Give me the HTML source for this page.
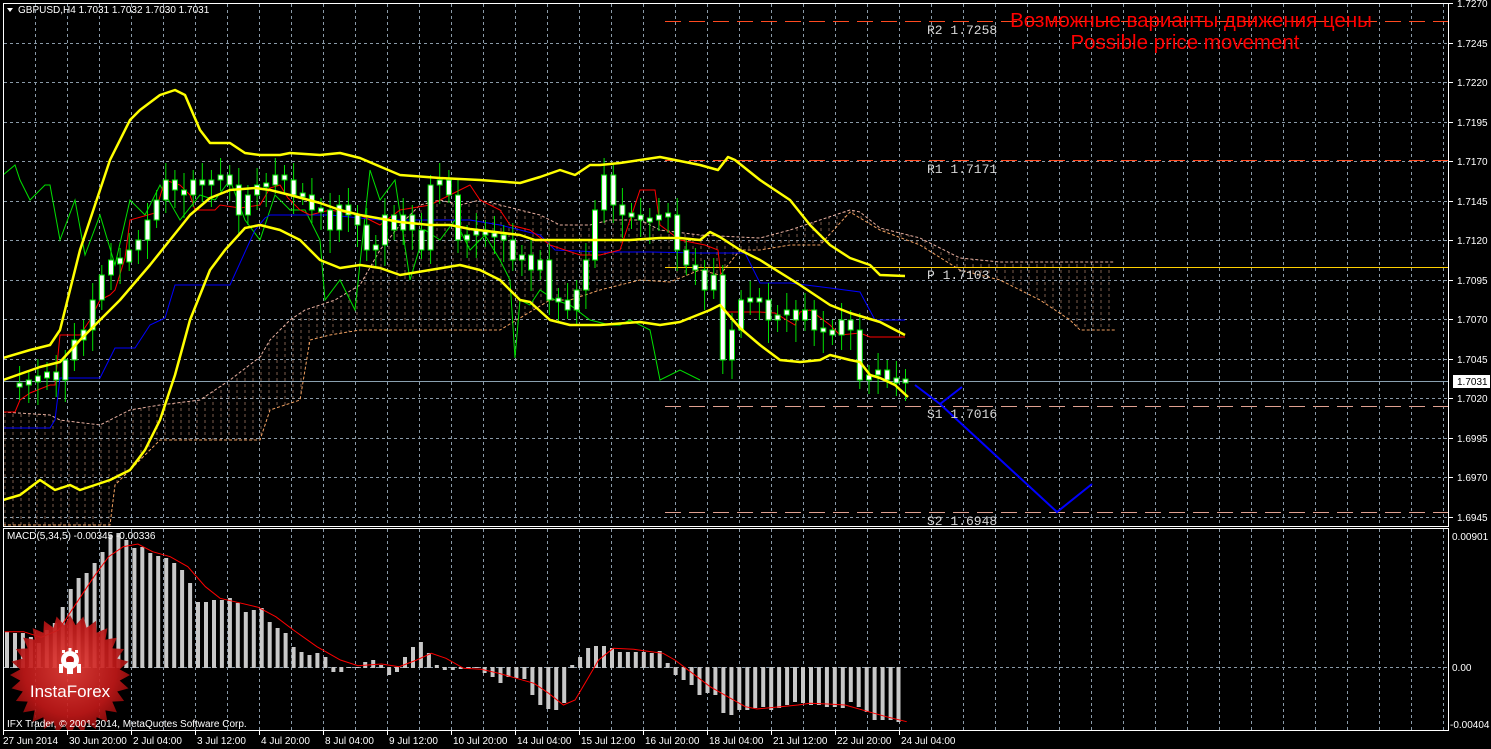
<!DOCTYPE html>
<html><head><meta charset="utf-8">
<style>
html,body{margin:0;padding:0;background:#000;}
body{width:1491px;height:749px;overflow:hidden;position:relative;}
svg{position:absolute;left:0;top:0;}
</style></head>
<body>
<svg id="s" width="1491" height="749" xmlns="http://www.w3.org/2000/svg" font-family="Liberation Sans, sans-serif">
<defs>
<clipPath id="mainclip"><rect x="4" y="4" width="1444" height="522"/></clipPath>
<clipPath id="macdclip"><rect x="4" y="529" width="1444" height="201"/></clipPath>
<pattern id="hatch" width="8" height="6" patternUnits="userSpaceOnUse" x="3">
<line x1="2" y1="0" x2="2" y2="3" stroke="#e8b090" stroke-width="1" opacity="0.75"/>
</pattern>
<radialGradient id="lg" cx="50%" cy="45%" r="55%">
<stop offset="0" stop-color="#e8403a"/><stop offset="0.7" stop-color="#c01818"/><stop offset="1" stop-color="#8a0a0a"/>
</radialGradient>
</defs>
<g id="g"></g>
</svg>
<script>
var out=[];
function P(a){return a.map(function(p){return p[0]+','+p[1];}).join(' ');}
out.push('<rect x="3.5" y="3.5" width="1445" height="523" fill="none" stroke="#fff"/>');
out.push('<rect x="3.5" y="528.5" width="1445" height="202" fill="none" stroke="#fff"/>');
var gv='';
for(var x=35;x<1448;x+=32){gv+='<line x1="'+x+'.5" y1="4" x2="'+x+'.5" y2="526" stroke="#8a9aa8" stroke-dasharray="3,3"/>';
 gv+='<line x1="'+x+'.5" y1="529" x2="'+x+'.5" y2="730" stroke="#8a9aa8" stroke-dasharray="3,3"/>';}
var prices=['1.7270','1.7245','1.7220','1.7195','1.7170','1.7145','1.7120','1.7095','1.7070','1.7045','1.7020','1.6995','1.6970','1.6945'];
for(var i=0;i<prices.length;i++){var y=Math.round(3+i*39.5);
 if(i>0)gv+='<line x1="4" y1="'+y+'.5" x2="1448" y2="'+y+'.5" stroke="#8a9aa8" stroke-dasharray="3,3"/>';
 gv+='<line x1="1449" y1="'+y+'.5" x2="1453" y2="'+y+'.5" stroke="#fff"/>';
 gv+='<text x="1457" y="'+(y+4)+'" font-size="10" fill="#fff">'+prices[i]+'</text>';}
gv+='<line x1="4" y1="667.5" x2="1448" y2="667.5" stroke="#8a9aa8" stroke-dasharray="3,3"/>';
gv+='<text x="1452" y="540" font-size="10" fill="#fff">0.00901</text>';
gv+='<text x="1452" y="671" font-size="10" fill="#fff">0.00</text>';
gv+='<text x="1450" y="728" font-size="10" fill="#fff">-0.00404</text>';
out.push(gv);
var m=['<g clip-path="url(#mainclip)">'];
var up=[[3,412],[50,415],[60,420],[100,425],[130,410],[160,405],[200,400],[230,380],[260,357],[270,340],[290,320],[305,310],[320,305],[335,300],[360,285],[380,250],[400,225],[420,205],[440,200],[460,205],[480,200],[500,205],[520,210],[540,215],[560,225],[590,225],[610,220],[640,220],[660,230],[700,235],[760,238],[790,230],[820,220],[850,210],[860,212],[880,228],[920,238],[960,258],[1000,262],[1115,262]];
var lo=[[3,525],[110,525],[115,485],[160,440],[200,440],[260,440],[270,410],[300,400],[310,340],[330,335],[360,330],[400,330],[500,330],[550,300],[570,300],[600,290],[640,280],[670,282],[700,270],[720,275],[740,250],[760,250],[790,245],[820,245],[850,212],[880,230],[920,245],[960,270],[1000,280],[1040,300],[1070,320],[1080,330],[1115,330]];
m.push('<polygon points="'+P(up)+' '+P(lo.slice().reverse())+'" fill="url(#hatch)" opacity="0.7"/>');
m.push('<polyline points="'+P(up)+'" fill="none" stroke="#e8b0a0" stroke-dasharray="3,2"/>');
m.push('<polyline points="'+P(lo)+'" fill="none" stroke="#f0a060" stroke-dasharray="3,2"/>');
m.push('<line x1="665" y1="21.5" x2="1448" y2="21.5" stroke="#ff4a20" stroke-dasharray="16,8"/>');
m.push('<line x1="665" y1="160.5" x2="1448" y2="160.5" stroke="#ff4a20" stroke-dasharray="16,8"/>');
m.push('<line x1="665" y1="267.5" x2="1448" y2="267.5" stroke="#ffd000"/>');
m.push('<line x1="4" y1="381.5" x2="1448" y2="381.5" stroke="#8aa0b0"/>');
m.push('<line x1="665" y1="406.5" x2="1448" y2="406.5" stroke="#e0a090" stroke-dasharray="16,8"/>');
m.push('<line x1="665" y1="512.5" x2="1448" y2="512.5" stroke="#e0a090" stroke-dasharray="16,8"/>');
var gr=[[3,175],[15,165],[20,180],[30,200],[45,185],[50,185],[60,240],[75,200],[85,255],[100,215],[115,265],[130,200],[145,215],[160,185],[180,220],[200,195],[215,200],[230,180],[245,220],[260,240],[275,195],[290,210],[305,210],[320,240],[325,300],[340,280],[355,310],[370,170],[380,200],[395,180],[410,280],[425,230],[440,240],[455,220],[470,250],[485,235],[500,260],[510,280],[515,358],[520,300],[530,305],[540,290],[555,300],[570,305],[590,320],[610,325],[620,325],[630,320],[650,330],[660,380],[680,370],[700,380]];
m.push('<polyline points="'+P(gr)+'" fill="none" stroke="#00e000" stroke-width="1"/>');
var bl=[[3,428],[50,428],[55,420],[60,378],[100,378],[115,348],[135,348],[150,325],[165,318],[175,285],[230,285],[255,230],[265,218],[270,215],[330,215],[380,220],[470,220],[500,225],[540,235],[555,250],[600,252],[650,252],[700,253],[745,253],[760,283],[790,283],[830,288],[860,292],[875,320],[905,320]];
m.push('<polyline points="'+P(bl)+'" fill="none" stroke="#0000ff" stroke-width="1"/>');
var rd=[[3,412],[15,412],[20,400],[30,393],[50,385],[55,385],[60,335],[80,335],[90,320],[100,300],[110,295],[115,290],[125,258],[130,220],[155,213],[165,180],[180,185],[190,195],[195,210],[200,210],[215,210],[220,205],[240,208],[260,205],[270,188],[280,185],[288,198],[300,210],[310,215],[330,210],[360,215],[380,225],[400,210],[430,205],[450,195],[460,190],[470,185],[480,200],[500,210],[510,225],[530,230],[550,245],[565,250],[580,255],[600,255],[620,250],[640,190],[655,190],[660,225],[680,240],[705,245],[718,250],[725,312],[760,312],[775,313],[795,325],[800,312],[810,310],[830,325],[840,335],[860,333],[870,337],[905,337]];
m.push('<polyline points="'+P(rd)+'" fill="none" stroke="#ff0000" stroke-width="1"/>');
var cl=[385,385,380,378,372,380,360,340,330,300,275,260,262,250,240,220,200,180,190,195,180,185,180,175,185,215,195,185,185,175,180,195,195,210,210,230,205,215,225,250,245,215,230,215,230,250,185,180,195,240,235,230,235,235,240,260,255,270,260,300,300,310,290,260,210,175,205,215,215,220,220,215,215,250,265,270,290,275,360,330,300,300,300,320,315,310,320,310,330,330,335,320,330,380,375,370,380,381,381];
var cs='';var n=cl.length;var sp=895/(n-1);
for(var i=1;i<n;i++){var x=(8+i*sp).toFixed(1), o=cl[i-1], c=cl[i];
 var t=Math.min(o,c), b=Math.max(o,c); if(b-t<4){t-=2;b+=2;}
 var wt=t-10-((i*7)%14), wb=b+8+((i*5)%16);
 cs+='<line x1="'+(+x+2.5)+'" y1="'+wt+'" x2="'+(+x+2.5)+'" y2="'+wb+'" stroke="#00e000"/>';
 cs+='<rect x="'+x+'" y="'+t+'" width="5" height="'+(b-t)+'" fill="#fff" stroke="#00e000" stroke-width="1"/>';}
m.push(cs);
var yu=[[3,358],[30,350],[50,345],[60,330],[80,250],[100,190],[110,160],[130,120],[140,110],[160,95],[175,90],[185,95],[200,130],[210,143],[230,143],[245,153],[260,155],[280,155],[290,153],[320,155],[340,153],[360,158],[400,175],[440,178],[480,180],[520,183],[540,177],[560,170],[575,175],[590,165],[600,165],[620,163],[660,157],[700,165],[718,170],[728,157],[735,160],[760,180],[790,200],[810,225],[830,245],[850,258],[870,265],[880,275],[905,276]];
var ym=[[3,380],[40,367],[60,362],[80,340],[100,320],[120,300],[150,265],[170,240],[190,215],[210,198],[230,190],[255,188],[270,190],[290,195],[320,203],[340,210],[360,215],[400,222],[430,225],[450,225],[470,229],[520,235],[535,240],[550,240],[580,240],[600,240],[630,240],[660,238],[680,238],[700,240],[710,232],[720,237],[740,250],[760,260],[800,285],[830,305],[850,313],[880,322],[905,335]];
var yl=[[3,500],[20,495],[40,480],[55,490],[70,485],[80,490],[95,485],[110,480],[130,470],[145,450],[160,420],[175,375],[190,320],[210,270],[225,250],[245,228],[260,225],[280,230],[300,240],[320,260],[340,268],[360,265],[380,268],[400,275],[430,270],[460,265],[480,270],[500,280],[520,300],[530,302],[550,320],[570,325],[600,325],[640,322],[660,325],[680,322],[710,310],[720,305],[740,328],[760,345],[780,360],[800,362],[820,360],[830,355],[850,360],[860,362],[870,375],[880,378],[895,385],[908,397]];
[yu,ym,yl].forEach(function(a){m.push('<polyline points="'+P(a)+'" fill="none" stroke="#ffff00" stroke-width="2.5" stroke-linejoin="round"/>');});
m.push('<polyline points="915,385 940,404 962,387" fill="none" stroke="#0000ff" stroke-width="2"/>');
m.push('<polyline points="940,404 1057,512 1092,484" fill="none" stroke="#0000ff" stroke-width="2"/>');
m.push('</g>');
out.push(m.join(''));
var lf='style="font-family:\'Liberation Mono\',monospace;font-size:13px;" fill="#d8d8d8"';
out.push('<text x="927" y="34" '+lf+'>R2 1.7258</text><text x="927" y="173" '+lf+'>R1 1.7171</text><text x="927" y="279" '+lf+'>P  1.7103</text><text x="927" y="418" '+lf+'>S1 1.7016</text><text x="927" y="525" '+lf+'>S2 1.6948</text>');
out.push('<text x="1191" y="27" font-size="20.5" fill="#ff0000" text-anchor="middle">Возможные варианты движения цены</text>');
out.push('<text x="1185" y="49" font-size="20.5" fill="#ff0000" text-anchor="middle">Possible price movement</text>');
out.push('<rect x="1453" y="375" width="37" height="13" fill="#fff"/><text x="1457" y="385" font-size="10" fill="#000">1.7031</text>');
out.push('<polygon points="7,8 13,8 10,12" fill="#fff"/><text x="18" y="13" font-size="10" fill="#fff">GBPUSD,H4  1.7031 1.7032 1.7030 1.7031</text>');
var mc=['<g clip-path="url(#macdclip)">'];
var tops=[632,633,633,637,643,630,623,607,589,578,573,563,552,535,533,540,548,547,553,556,558,563,570,583,602,602,600,600,598,603,612,610,608,622,628,633,647,652,655,653,657,672,672,668,667,662,660,665,675,672,657,647,642,653,665,670,670,669,669,668,673,677,683,677,678,679,695,705,709,710,703,665,657,648,646,646,648,652,652,652,652,653,651,663,675,680,685,695,693,695,713,715,710,710,708,707,710,708,705,702,703,705,705,707,707,708,702,707,712,720,720,720,722];
var bs='';
for(var i=0;i<tops.length;i++){var x=(5+i*7.96).toFixed(1);var t=tops[i];var y1=Math.min(t,667),y2=Math.max(t,668);
 bs+='<rect x="'+x+'" y="'+y1+'" width="4" height="'+(y2-y1)+'" fill="#c8c8c8"/>';}
mc.push(bs);
var sg=[[8,335],[40,335],[70,352],[100,330],[130,250],[160,170],[185,110],[210,80],[235,72],[260,95],[290,110],[320,140],[350,200],[375,235],[400,245],[440,262],[470,290],[500,330],[540,380],[580,420],[610,437],[650,432],[680,440],[710,420],[735,400],[760,415],[790,445],[820,448],[850,460],[880,475],[910,490],[935,520],[960,555],[980,540],[1000,480],[1020,420],[1045,385],[1080,388],[1110,395],[1130,400],[1150,420],[1180,460],[1210,500],[1240,530],[1270,560],[1290,567],[1330,560],[1360,555],[1380,550],[1410,552],[1440,555],[1480,575],[1510,590],[1545,605]].map(function(p){return [(p[0]/1.704).toFixed(1),(520+p[1]/3).toFixed(1)];});
mc.push('<polyline points="'+P(sg)+'" fill="none" stroke="#ff0000" stroke-width="1"/>');
var st='';var n2=28,cx=70,cy=675;
for(var k=0;k<n2*2;k++){var a=Math.PI*2*k/(n2*2);var r=(k%2==0)?60:50;st+=(cx+r*Math.sin(a)).toFixed(1)+','+(cy-r*Math.cos(a)).toFixed(1)+' ';}
mc.push('<polygon points="'+st+'" fill="url(#lg)" opacity="0.92"/>');
mc.push('</g>');
out.push(mc.join(''));
out.push('<g fill="#fff"><circle cx="70" cy="660" r="9"/><circle cx="70" cy="660" r="4" fill="#c01818"/><rect x="67" y="662" width="6" height="12"/><rect x="59" y="664" width="4" height="9"/><rect x="77" y="664" width="4" height="9"/><rect x="62" y="650" width="3" height="3"/><rect x="75" y="650" width="3" height="3"/><rect x="68.5" y="648" width="3" height="3"/></g>');
out.push('<text x="70" y="697" font-size="17" fill="#fff" text-anchor="middle">InstaForex</text>');
out.push('<text x="7" y="539" font-size="10" fill="#fff">MACD(5,34,5) -0.00345 -0.00336</text>');
out.push('<text x="7" y="727" font-size="10" fill="#fff">IFX Trader, © 2001-2014, MetaQuotes Software Corp.</text>');
var tl=['27 Jun 2014','30 Jun 20:00','2 Jul 04:00','3 Jul 12:00','4 Jul 20:00','8 Jul 04:00','9 Jul 12:00','10 Jul 20:00','14 Jul 04:00','15 Jul 12:00','16 Jul 20:00','18 Jul 04:00','21 Jul 12:00','22 Jul 20:00','24 Jul 04:00'];
var ta='';
for(var i=0;i<tl.length;i++){var x=3+i*64;ta+='<line x1="'+x+'.5" y1="731" x2="'+x+'.5" y2="735" stroke="#fff"/><text x="'+(x+(i==0?0:2))+'" y="744" font-size="10" fill="#fff">'+tl[i]+'</text>';}
out.push(ta);
document.getElementById('g').innerHTML=out.join('');
</script>
</body></html>
